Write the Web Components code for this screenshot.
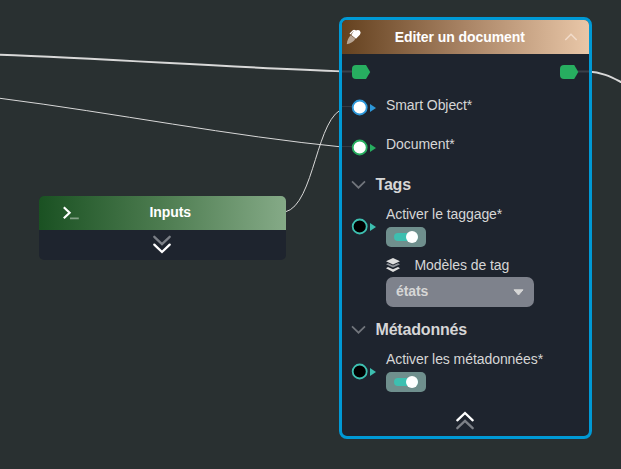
<!DOCTYPE html>
<html lang="fr">
<head>
<meta charset="utf-8">
<title>Editer un document</title>
<style>
html,body{margin:0;height:100%;overflow:hidden}
body{background:#293031;font-family:"Liberation Sans",Arial,sans-serif;font-size:14px;letter-spacing:-.07px;color:#d6d6d6}
</style>
</head>
<body>
<flow-canvas>
  <flow-node class="inputs" style="--from:#1a5122;--mid:#4d7c50;--to:#85aa87" heading="Inputs">
    <svg slot="icon" class="term" width="18" height="14" viewBox="0 0 18 14" fill="none"><path d="M1.800 1.300 7.600 6.800 1.800 12.300" stroke="#fff" stroke-width="2.200"/><path d="M8 12.400h8.800" stroke="#82a186" stroke-width="1.800"/></svg>
    <double-chevron dir="down" slot="footer"></double-chevron>
  </flow-node>
  <flow-node class="editor" selected style="--from:#64411f;--mid:#a98465;--to:#e9c7a8" heading="Editer un document">
    <svg slot="icon" width="16" height="16" viewBox="0 0 16 16"><path d="M4.800 6.200 9.400 9.800C8 12.500 4.500 14.500.8 15.200 1 11.500 2.500 8.500 4.800 6.200Z" fill="#b8a593"/><path d="M5.300 6 7.500 2.300 9.800 1.500Q12.300 .2 13.900 1.700 15.400 3.500 13.900 5.800L10 9.800Z" fill="#fff"/><path d="M4 5 7.200 1.700Q8.200 1 9.600 2.200" fill="none" stroke="#fff" stroke-width="1.300"/></svg>
    <svg slot="action" width="14" height="8" viewBox="0 0 14 8" fill="none"><path d="M1.300 7 7 1.200 12.700 7" stroke="#f2dccb" stroke-width="1.400"/></svg>
    <flow-ports></flow-ports>
    <flow-input color="#2d98da">Smart Object*</flow-input>
    <flow-input color="#27ae60" style="--drop:1px">Document*</flow-input>
    <flow-section>Tags</flow-section>
    <flow-toggle>Activer le taggage*</flow-toggle>
    <flow-select label="Modèles de tag">états</flow-select>
    <flow-section>Métadonnés</flow-section>
    <flow-toggle>Activer les métadonnées*</flow-toggle>
    <double-chevron dir="up" slot="footer"></double-chevron>
  </flow-node>
</flow-canvas>
<script>
const define = (name, render) => customElements.define(name, class extends HTMLElement {
  connectedCallback() {
    if (!this.shadowRoot) this.attachShadow({mode: 'open'}).innerHTML = render(this);
  }
});

define('flow-canvas', () => `<style>
:host{display:block;position:relative;width:621px;height:469px;overflow:hidden}
.links{position:absolute;inset:0}
::slotted(.inputs){position:absolute;left:39px;top:196px;width:246.5px;height:63.500px}
::slotted(.editor){position:absolute;left:339px;top:17px;width:252.500px;height:422px}
</style>
<svg class="links" width="621" height="469" fill="none" stroke="#d8d8d8">
<path d="M0 54.700C115 59 230 67.500 345 71.400" stroke-width="2"/>
<path d="M0 98.300C115 113 230 136 345 147.300" stroke-width="1"/>
<path d="M285 212C315 205 316 114 345 108.300" stroke-width="1"/>
<path d="M588 71.500C602 72 612 77.500 622 82.500" stroke-width="2"/>
</svg><slot></slot>`);

define('flow-node', el => `<style>
:host{display:flex;flex-direction:column;box-sizing:border-box;border-radius:5px;overflow:hidden;background:#1e242e}
:host([selected]){border:3px solid #0099d5;border-radius:8px}
header{display:grid;grid-template-columns:1fr auto 1fr;align-items:center;height:34px;flex:none;box-sizing:border-box;background:linear-gradient(90deg,var(--from),var(--mid) 50%,var(--to))}
:host([selected]) header{padding:0 11px 0 4px}
:host(:not([selected])) header{padding:0 15px 0 23px}
.a{justify-self:end;display:flex}.i{display:flex}
h2{margin:0;font-size:14px;line-height:16px;color:#fff;white-space:nowrap}
:host([selected]) h2{transform:translate(-2px,0)}
:host(:not([selected])) h2{transform:translate(4px,-1px)}
footer{flex:1;display:flex;justify-content:center;align-items:center}
:host([selected]) footer{padding:10px 1px 0 0}
:host(:not([selected])) footer{padding-bottom:1px}
</style><header><span class="i"><slot name="icon"></slot></span><h2>${el.getAttribute('heading')}</h2><span class="a"><slot name="action"></slot></span></header>
<slot></slot><footer><slot name="footer"></slot></footer>`);

define('double-chevron', el => {
  const up = el.getAttribute('dir') === 'up';
  return `<style>:host{display:flex}</style><svg width="20" height="19" viewBox="0 0 20 19" fill="none" stroke-width="2.300" stroke-linecap="round">
${up ? '<path d="M2.300 17.200 10 9.800 17.700 17.200" stroke="#7c8087"/><path d="M2.300 9.300 10 2 17.700 9.300" stroke="#fff"/>'
     : '<path d="M2.300 1.800 10 9.200 17.700 1.800" stroke="#7c8087"/><path d="M2.300 9.600 10 17 17.700 9.600" stroke="#fff"/>'}</svg>`;
});

define('flow-ports', () => `<style>
:host{display:flex;justify-content:space-between;align-items:center;height:34px;box-sizing:border-box;padding-top:2px;flex:none}
svg{display:block}</style>
<svg width="29" height="14"><path d="M0 6.500h12" stroke="#3a3f48" stroke-width="2"/><path d="M14 0h10L28.200 7 24 14H14Q10 14 10 10V4Q10 0 14 0Z" fill="#27ae60"/></svg>
<svg width="28.500" height="14"><path d="M17 6.500h12" stroke="#3a3f48" stroke-width="2"/><path d="M4 0H14.200L18.300 7 14.200 14H4Q0 14 0 10V4Q0 0 4 0Z" fill="#27ae60"/></svg>`);

const socket = (color, fill, line) => `<svg class="p" width="44" height="17" style="display:block;flex:none">
${line ? '<path d="M0 7.500h10" stroke="#343a43"/>' : ''}<circle cx="17.700" cy="8.500" r="7" fill="${fill}" stroke="${color}" stroke-width="1.800"/><path d="M28 5 34 9 28 13Z" fill="${color}"/></svg>`;

define('flow-input', el => `<style>
:host{display:flex;align-items:center;height:39px;flex:none}
.p{padding-top:var(--drop,0)}
span{line-height:16px;padding-bottom:5px}</style>
${socket(el.getAttribute('color'), '#fff', true)}<span><slot></slot></span>`);

define('flow-section', () => `<style>
:host{display:flex;align-items:center;gap:9.500px;height:37px;padding-left:9px;flex:none;font-size:16px;letter-spacing:-.18px;font-weight:bold}
</style><svg width="15" height="9" fill="none"><path d="M1 1.300 7.500 7.700 14 1.300" stroke="#71757c" stroke-width="1.700"/></svg><span><slot></slot></span>`);

define('flow-toggle', () => `<style>
:host{display:flex;align-items:center;height:47px;flex:none}
.f{display:flex;flex-direction:column;gap:5px}
label{line-height:16px}
.t{width:39.5px;height:20px;box-sizing:border-box;border-radius:5px;background:#6f8f8d;display:flex;align-items:center;padding-left:8px}
.b{width:24px;height:8px;border-radius:4px;background:#3dbfb0;display:flex;justify-content:flex-end;align-items:center}
.k{width:12px;height:12px;border-radius:50%;background:#fff;flex:none}
</style>${socket('#3dbfb0', '#000', false)}<div class="f"><label><slot></slot></label><div class="t"><div class="b"><div class="k"></div></div></div></div>`);

define('flow-select', el => `<style>
:host{display:flex;flex-direction:column;gap:4px;height:61px;box-sizing:border-box;padding:7px 0 0 44px;flex:none}
.l{display:flex;align-items:center;gap:14.500px;height:16px;line-height:16px}
.s{width:148px;height:30px;box-sizing:border-box;border-radius:7px;background:#7e828c;display:flex;align-items:center;justify-content:space-between;padding:0 10px;font-weight:bold}
.s span{padding-bottom:3px}
.s svg{padding-top:1px}
</style><div class="l"><svg width="14" height="14" viewBox="0 0 14 14" fill="#dedede"><path d="M7 0 14 3.200 7 6.600 0 3.200Z"/><path d="M0 6.200 2 5.300 7 7.600 12 5.300 14 6.200 7 9.500Z" fill="#90949a"/><path d="M0 10.300 2 9.100 7 11.300 12 9.100 14 10.300 7 13.900Z"/></svg><span>${el.getAttribute('label')}</span></div>
<div class="s"><span><slot></slot></span><svg width="11" height="7"><path d="M1 .8H10L5.500 6Z" fill="#d6d6d6" stroke="#d6d6d6" stroke-linejoin="round"/></svg></div>`);
</script>
</body>
</html>
